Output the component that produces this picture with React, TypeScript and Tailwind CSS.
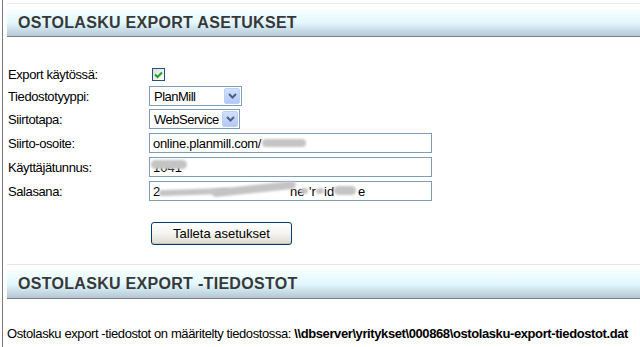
import React from "react";

const font = { fontFamily: '"Liberation Sans", Arial, sans-serif' };

function Header({ title, pt, h }: { title: string; pt: string; h: string }) {
  return (
    <div className={`border-t border-[#e6e6e6] ${pt}`}>
      <div
        className={`${h} flex items-center pl-[11px] border-b border-[#7f7f7f] bg-linear-to-b from-[#f6ffff] via-[#e2f7fd] to-[#b4c7d4]`}
      >
        <span className="text-[16px] font-bold tracking-[0.3px] text-[#383838] leading-none">
          {title}
        </span>
      </div>
    </div>
  );
}

function Chevron() {
  return (
    <svg width="9" height="6" viewBox="0 0 9 6">
      <path d="M1 1 L4.5 4.5 L8 1" stroke="#4d6185" strokeWidth="2" fill="none" />
    </svg>
  );
}

function Select({ value, w }: { value: string; w: string }) {
  return (
    <div className={`${w} h-[20px] border border-[#7f9db9] bg-white flex items-center justify-between pl-[4px] pr-[1px]`}>
      <span className="text-[13px] text-black leading-none tracking-[-0.5px]">{value}</span>
      <div className="w-[16px] h-[16px] rounded-[2px] border border-[#bad0f7] bg-linear-to-b from-[#d3e0fd] to-[#b2c8f6] flex items-center justify-center">
        <Chevron />
      </div>
    </div>
  );
}

function Blob({ cls }: { cls: string }) {
  return <div className={`absolute bg-[#c4c4c4] blur-[1px] rounded-full ${cls}`} />;
}

function Row({ label, h, children }: { label: string; h: string; children?: React.ReactNode }) {
  return (
    <div className={`flex ${h}`}>
      <div className="w-[141px] h-[20px] flex items-center text-[13px] text-black leading-none tracking-[-0.4px]">
        {label}
      </div>
      <div className="flex items-start">{children}</div>
    </div>
  );
}

export default function App() {
  return (
    <div className="w-[640px] h-[347px] bg-white overflow-hidden pl-[2px]" style={font}>
      <div className="h-full border-l border-[#7a7a7a] pl-[4px] pt-[3px] flex flex-col">
        <Header title="OSTOLASKU EXPORT ASETUKSET" pt="pt-[6px]" h="h-[27px]" />

        <div className="pl-[1px] mt-[26px] flex flex-col">
          <div className="flex h-[23px] items-center">
            <div className="w-[141px] text-[13px] text-black leading-none tracking-[-0.4px]">Export käytössä:</div>
            <div className="ml-[3px] w-[13px] h-[13px] border border-[#1c5180] bg-linear-to-br from-[#dcdcd5] to-white flex items-center justify-center">
              <svg width="9" height="8" viewBox="0 0 9 8">
                <path d="M1 3.5 L3.5 6 L8 1.5" stroke="#21a121" strokeWidth="2" fill="none" />
              </svg>
            </div>
          </div>
          <Row label="Tiedostotyyppi:" h="h-[23px]">
            <Select value="PlanMill" w="w-[93px]" />
          </Row>
          <Row label="Siirtotapa:" h="h-[24px]">
            <Select value="WebService" w="w-[91px]" />
          </Row>
          <Row label="Siirto-osoite:" h="h-[24px]">
            <div className="relative w-[283px] h-[20px] border border-[#7f9db9] bg-white flex items-center pl-[3px]">
              <span className="text-[13px] text-black leading-none tracking-[-0.3px]">online.planmill.com/</span>
              <Blob cls="left-[112px] top-[5px] w-[44px] h-[8px]" />
            </div>
          </Row>
          <Row label="Käyttäjätunnus:" h="h-[24px]">
            <div className="relative w-[283px] h-[20px] border border-[#7f9db9] bg-white flex items-center pl-[3px]">
              <span className="text-[13px] text-black leading-none">1041</span>
              <Blob cls="left-[1px] top-[2px] w-[36px] h-[9px]" />
            </div>
          </Row>
          <Row label="Salasana:" h="h-[24px]">
            <div className="relative w-[283px] h-[20px] border border-[#7f9db9] bg-white text-[13px] text-black leading-none">
              <span className="absolute left-[3px] top-[3px]">2</span>
              <span className="absolute left-[140px] top-[3px]">ne</span>
              <span className="absolute left-[159px] top-[3px]">'r</span>
              <span className="absolute left-[174px] top-[3px]">id</span>
              <span className="absolute left-[208px] top-[3px]">e</span>
              <Blob cls="left-[9px] top-[7px] w-[70px] h-[6px] -rotate-2" />
              <Blob cls="left-[62px] top-[3px] w-[84px] h-[8px] -rotate-6" />
              <Blob cls="left-[150px] top-[6px] w-[8px] h-[6px]" />
              <Blob cls="left-[166px] top-[6px] w-[8px] h-[6px]" />
              <Blob cls="left-[184px] top-[4px] w-[22px] h-[9px]" />
            </div>
          </Row>

          <div className="mt-[16px] ml-[143px]">
            <button className="w-[141px] h-[23px] rounded-[3px] border border-[#003c74] bg-linear-to-b from-white via-[#f4f4f0] to-[#dedbd0] text-[13px] text-black leading-none shadow-[inset_0_-1px_0_#c8c5b8]">
              Talleta asetukset
            </button>
          </div>
        </div>

        <div className="mt-[19px]">
          <Header title="OSTOLASKU EXPORT -TIEDOSTOT" pt="pt-[5px]" h="h-[29px]" />
        </div>

        <div className="mt-[27px] text-[13px] text-black leading-[15px] tracking-[-0.4px] whitespace-nowrap">
          Ostolasku export -tiedostot on määritelty tiedostossa:{" "}
          <span className="font-bold">\\dbserver\yritykset\000868\ostolasku-export-tiedostot.dat</span>
        </div>
      </div>
    </div>
  );
}
